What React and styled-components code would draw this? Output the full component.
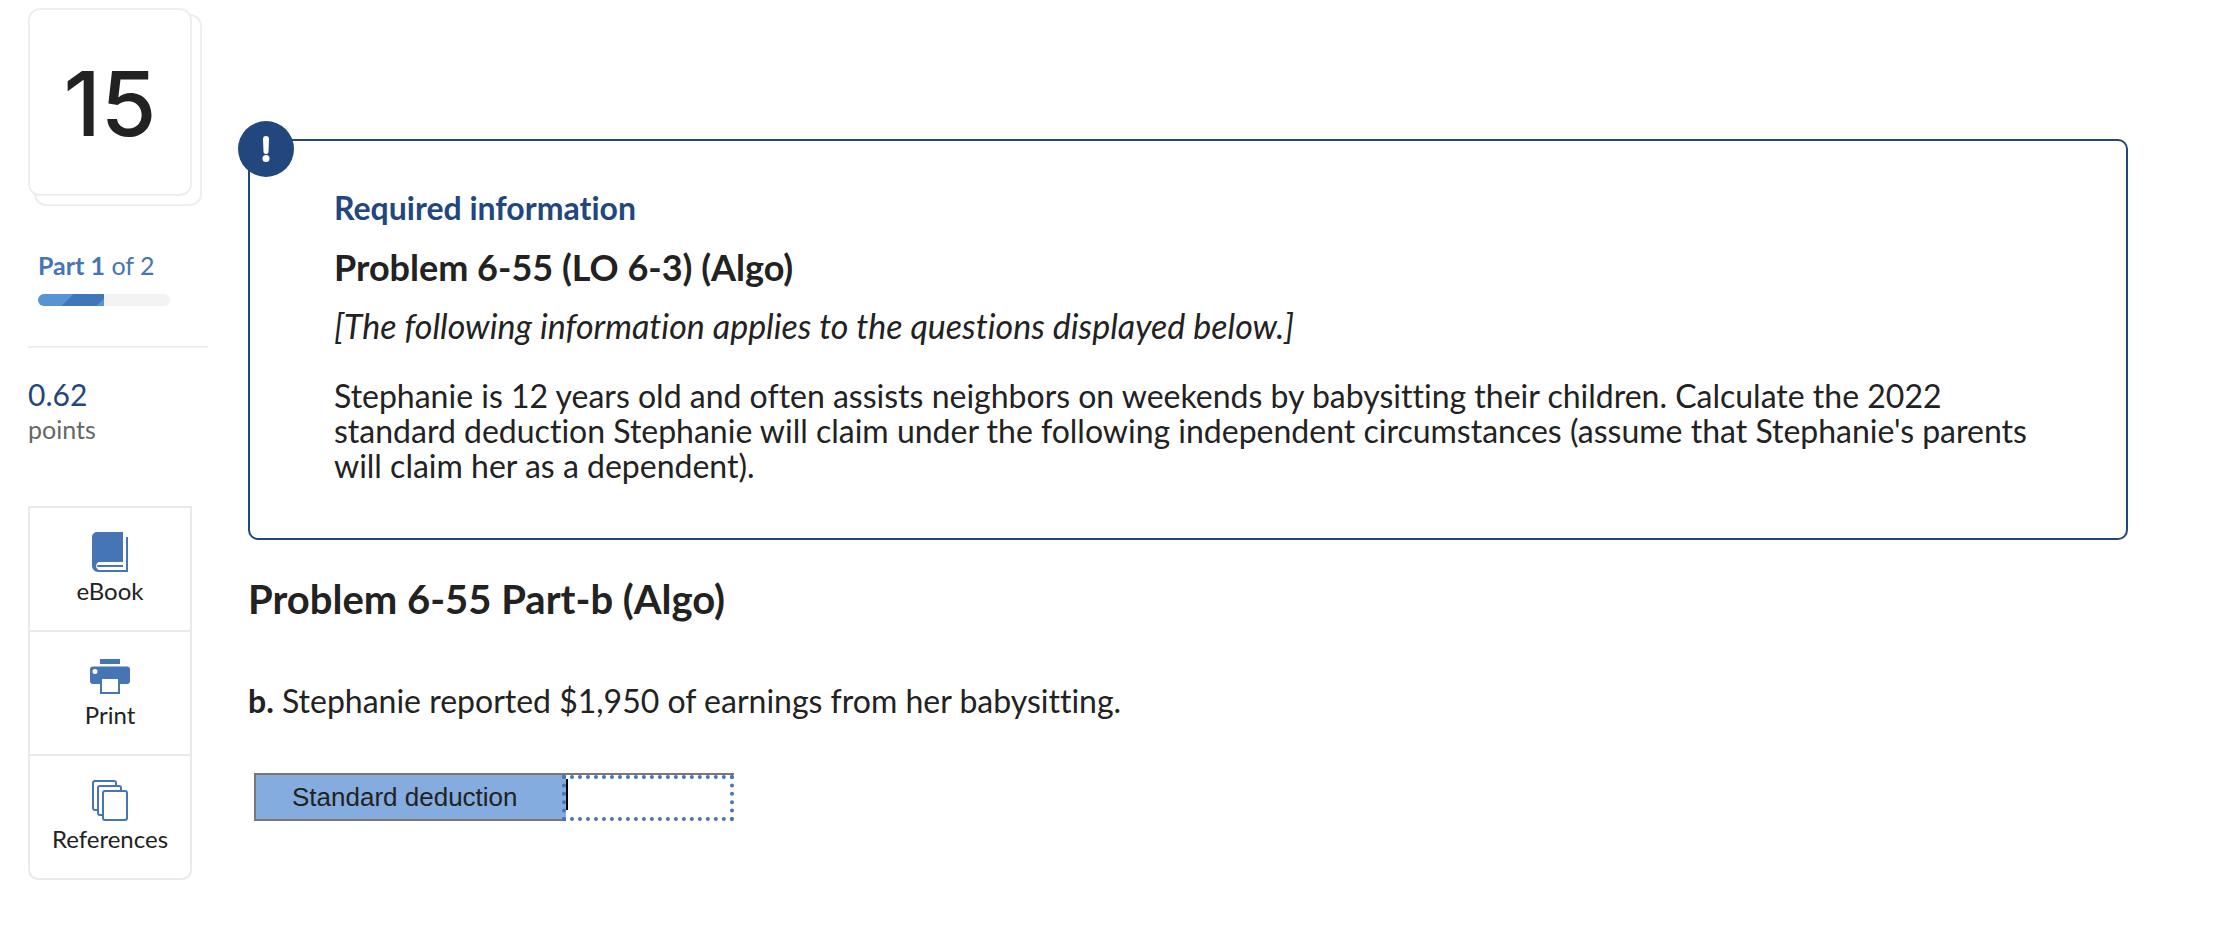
import React from 'react';
import styled, { createGlobalStyle, css } from 'styled-components';

const GlobalStyle = createGlobalStyle`
  * {
    box-sizing: border-box;
  }
  body {
    margin: 0;
    background: #fff;
    color: #222;
    font-family: Lato, 'Open Sans', sans-serif;
    font-size: 32px;
    font-variant-ligatures: none;
    line-height: 35px;
  }
  h1, h2, h3, p {
    margin: 0;
  }
`;

const Page = styled.div`
  display: flex;
  align-items: flex-start;
  gap: 40px;
  padding: 8px 86px 24px 28px;
`;

const Sidebar = styled.aside`
  flex: 0 0 180px;
`;

const NumberCard = styled.div`
  position: relative;
  display: flex;
  align-items: center;
  justify-content: center;
  width: 164px;
  height: 188px;
  padding-top: 4px;
  border: 2px solid #eee;
  border-radius: 12px;
  background: #fff;
  font-family: Inter, sans-serif;
  font-size: 90px;
  font-weight: 500;
  line-height: 92px;
  &::before {
    content: '';
    position: absolute;
    z-index: -1;
    inset: 4px -12px -12px 4px;
    border: 2px solid #eee;
    border-radius: 12px;
  }
`;

const Part = styled.div`
  padding: 52px 38px 40px 10px;
  border-bottom: 2px solid #eee;
  color: #4675b5;
  font-size: 25px;
  line-height: 34px;
`;

const Track = styled.div`
  height: 12px;
  margin-top: 12px;
  overflow: hidden;
  border-radius: 6px;
  background: #f3f3f3;
`;

const Fill = styled.div`
  height: 100%;
  background: repeating-linear-gradient(135deg, #5893d4 0 25px, #4077bb 25px 50px);
`;

const Points = styled.div`
  margin: 29px 0 59px;
  color: #666;
  font-size: 25px;
`;

const Score = styled.div`
  color: #22477f;
  font-size: 30px;
`;

const Tools = styled.nav`
  display: flex;
  flex-direction: column;
  gap: 2px;
  width: 164px;
  overflow: hidden;
  border: 2px solid #eaeaea;
  border-radius: 0 0 10px 10px;
  background: #eaeaea;
`;

const Tool = styled.button`
  display: flex;
  flex-direction: column;
  align-items: center;
  height: 122px;
  padding: 22px 0 0;
  border: 0;
  background: #fff;
  color: #222;
  font-family: inherit;
  font-size: 24px;
  line-height: 34px;
  cursor: pointer;
  &:last-child {
    border-radius: 0 0 8px 8px;
  }
`;

const Icon = styled.svg`
  display: block;
  width: 44px;
  height: 44px;
`;

const Main = styled.main`
  flex: 1;
  min-width: 0;
  padding-top: 131px;
`;

const InfoBox = styled.section`
  position: relative;
  padding: 49px 84px 55px;
  border: 2px solid #22477f;
  border-radius: 10px;
`;

const Badge = styled.div`
  position: absolute;
  top: -20px;
  left: -12px;
  display: flex;
  align-items: center;
  justify-content: center;
  width: 56px;
  height: 56px;
  border-radius: 50%;
  background: #22477f;
`;

const InfoTitle = styled.h2`
  color: #22477f;
  font-size: 32px;
  line-height: 36px;
`;

const ProblemTitle = styled.h3`
  margin: 20px 0;
  font-size: 36px;
  line-height: 42px;
`;

const Text = styled.p`
  ${({ $italic }) => $italic && css`
    margin-bottom: 35px;
    font-size: 34px;
    font-style: italic;
  `}
`;

const PartTitle = styled.h1`
  margin: 35px 0 60px;
  font-size: 40px;
  line-height: 48px;
`;

const AnswerTable = styled.table`
  margin: 55px 0 0 6px;
  border-collapse: separate;
  border-spacing: 0;
  font-family: 'Liberation Sans', Arial, sans-serif;
  font-size: 26px;
  line-height: 30px;
`;

const LabelCell = styled.th`
  width: 312px;
  height: 48px;
  padding: 0 36px;
  border: 2px solid #777;
  border-right: 0;
  background: #84acdf;
  font-weight: normal;
  text-align: left;
`;

const InputCell = styled.td`
  position: relative;
  padding: 0;
  border-top: 2px solid #777;
  &::before {
    content: '';
    position: absolute;
    top: 4px;
    left: 0;
    width: 2px;
    height: 31px;
    background: #000;
  }
`;

const AnswerInput = styled.input`
  display: block;
  width: 172px;
  height: 46px;
  margin-left: -4px;
  padding: 0;
  border: 4px dotted #4675b5;
  background: transparent;
  font: inherit;
  outline: none;
`;

const BookIcon = () => (
  <Icon viewBox="0 0 44 44" fill="#4675b5" aria-hidden="true">
    <path d="M9 2h26v30H10.500a4.500 4.500 0 0 0 0 8H38V7h2v35H10a6 6 0 0 1-6-6V7a5 5 0 0 1 5-5z" />
    <path d="M10 35h25v2H10a1 1 0 0 1 0-2z" />
  </Icon>
);

const PrintIcon = () => (
  <Icon viewBox="0 0 44 44" fill="#4675b5" aria-hidden="true">
    <path d="M12 5h20v5H12z" />
    <path
      fillRule="evenodd"
      d="M5 12.500h34a3 3 0 0 1 3 3V27a3 3 0 0 1-3 3h-7v10H12V30H5a3 3 0 0 1-3-3V15.500a3 3 0 0 1 3-3zM14 25v13h16V25zM7 15a2.500 2.500 0 1 0 0 5 2.500 2.500 0 0 0 0-5z"
    />
  </Icon>
);

const ReferencesIcon = () => (
  <Icon viewBox="0 0 44 44" fill="#fff" stroke="#4675b5" strokeWidth="2" aria-hidden="true">
    <rect x="5" y="3" width="23" height="29" rx="2" />
    <rect x="10" y="8" width="23" height="29" rx="2" />
    <rect x="15" y="13" width="24" height="29" rx="2" />
  </Icon>
);

const tools = [
  { name: 'eBook', icon: BookIcon },
  { name: 'Print', icon: PrintIcon },
  { name: 'References', icon: ReferencesIcon }
];

const App = () => (
  <>
    <GlobalStyle />
    <Page>
      <Sidebar>
        <NumberCard>15</NumberCard>
        <Part>
          <strong>Part 1</strong> of 2
          <Track>
            <Fill style={{ width: '50%' }} />
          </Track>
        </Part>
        <Points>
          <Score>0.62</Score>
          points
        </Points>
        <Tools>
          {tools.map(({ name, icon: ToolIcon }) => (
            <Tool key={name} type="button">
              <ToolIcon />
              {name}
            </Tool>
          ))}
        </Tools>
      </Sidebar>
      <Main>
        <InfoBox>
          <Badge>
            <svg width="8" height="26" viewBox="0 0 8 26" fill="#fff" aria-hidden="true">
              <path d="M1 3a3 3 0 0 1 6 0l-.5 12.500a2.500 2.500 0 0 1-5 0z" />
              <circle cx="4" cy="22.500" r="3.500" />
            </svg>
          </Badge>
          <InfoTitle>Required information</InfoTitle>
          <ProblemTitle>Problem 6-55 (LO 6-3) (Algo)</ProblemTitle>
          <Text $italic>[The following information applies to the questions displayed below.]</Text>
          <Text>
            Stephanie is 12 years old and often assists neighbors on weekends by babysitting their children. Calculate
            the 2022 standard deduction Stephanie will claim under the following independent circumstances (assume that
            Stephanie's parents will claim her as a dependent).
          </Text>
        </InfoBox>
        <PartTitle>Problem 6-55 Part-b (Algo)</PartTitle>
        <Text>
          <strong>b.</strong> Stephanie reported $1,950 of earnings from her babysitting.
        </Text>
        <AnswerTable>
          <tbody>
            <tr>
              <LabelCell scope="row">
                <label htmlFor="deduction">Standard deduction</label>
              </LabelCell>
              <InputCell>
                <AnswerInput id="deduction" type="text" />
              </InputCell>
            </tr>
          </tbody>
        </AnswerTable>
      </Main>
    </Page>
  </>
);

export default App;
